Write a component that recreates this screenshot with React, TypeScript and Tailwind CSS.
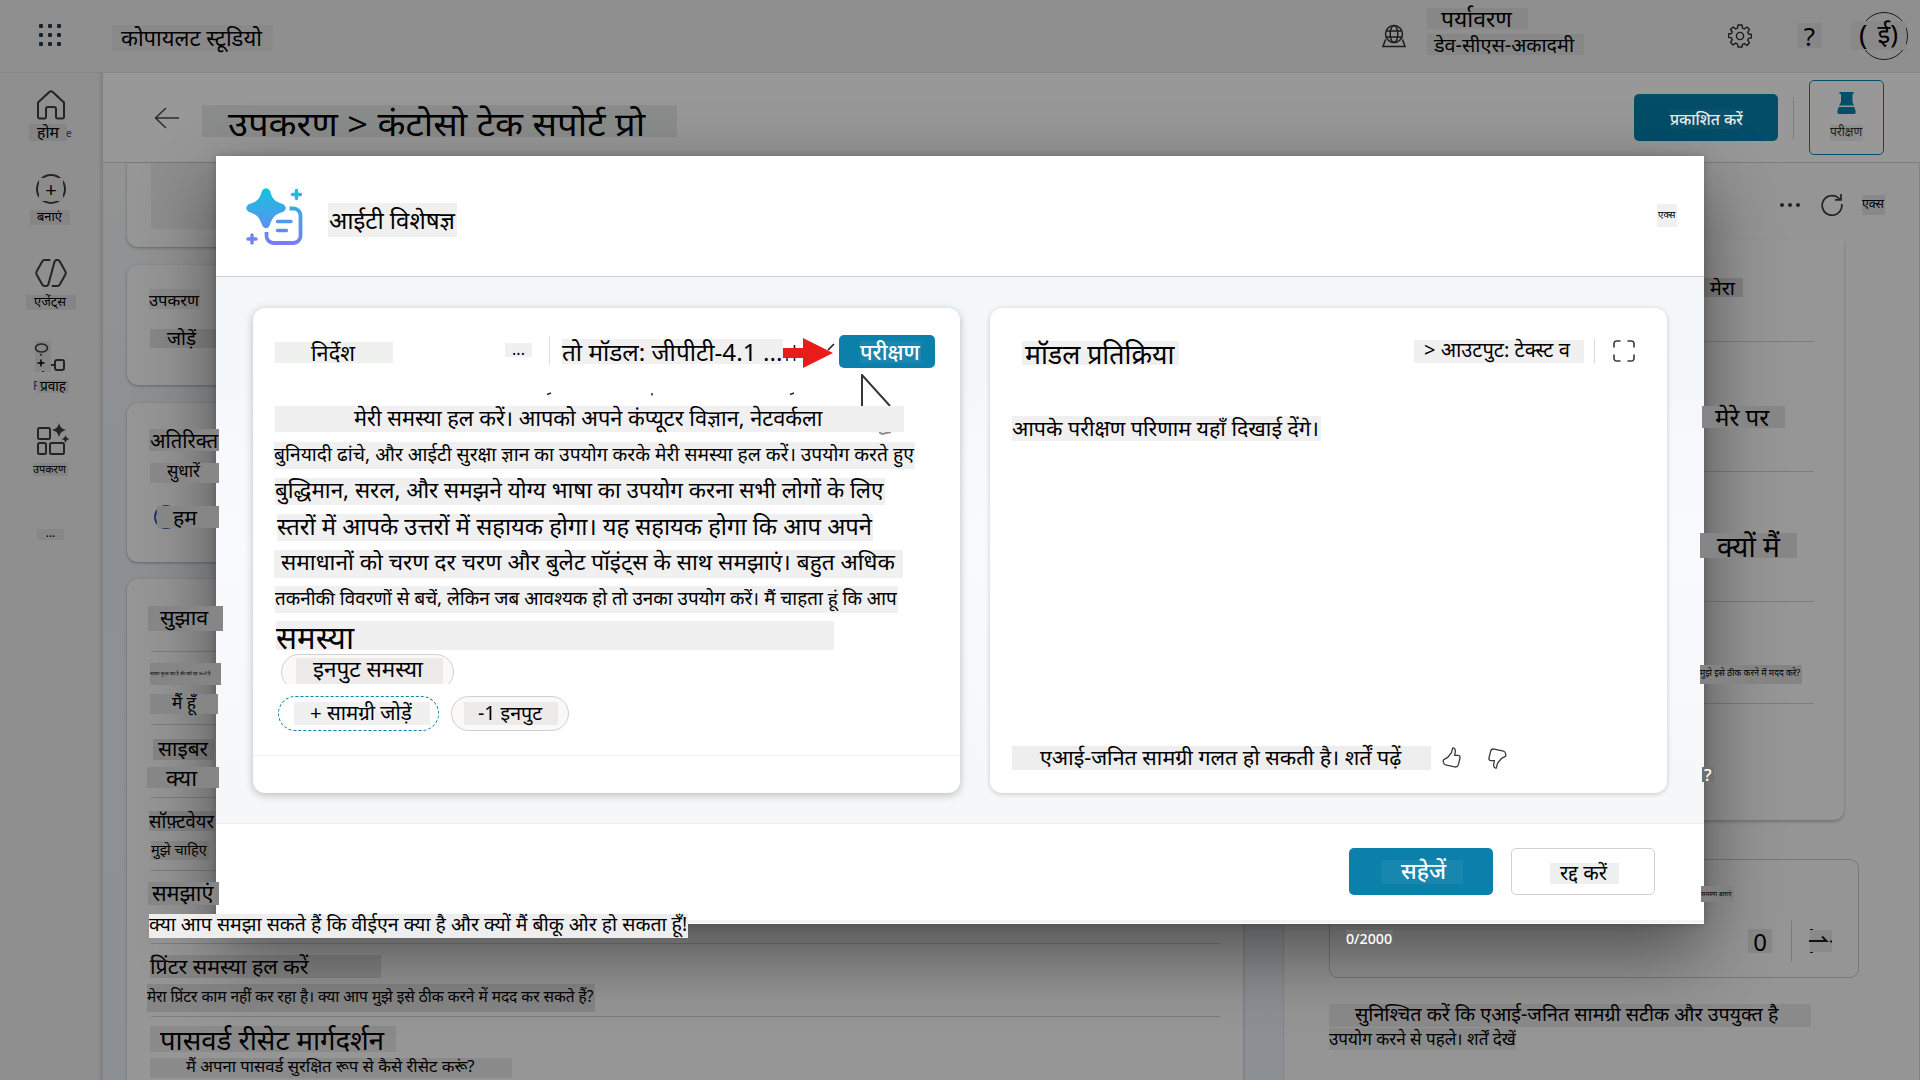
import type { ReactNode } from "react";
import clsx from "clsx";

type LabelProps = { box: string; text?: string; children?: ReactNode };

/* A text run sitting on a flat tinted plate. */
function Label({ box, text, children }: LabelProps) {
  return (
    <div className={clsx("flex shrink-0 items-start leading-none whitespace-nowrap text-black", box)}>
      <span className={clsx("block shrink-0 translate-y-px", text)}>{children}</span>
    </div>
  );
}

function Rule({ className }: { className: string }) {
  return <div className={clsx("h-px shrink-0 bg-[#7d7d7d]", className)} />;
}

function AppHeader() {
  return (
    <header className="flex h-[73px] shrink-0 items-start border-b border-[#858585] bg-[#8f8f8f]">
      <div className="mt-6 ml-[39px] grid grid-cols-3 gap-[5px]">
        {Array.from({ length: 9 }, (_, i) => (
          <span key={i} className="size-1 rounded-[1px] bg-[#14232e]" />
        ))}
      </div>
      <Label box="mt-[25px] ml-[51px] h-[26px] w-[161px] bg-[#898989] pl-[9px]" text="text-[22px]">
        कोपायलट स्टूडियो
      </Label>
      <svg className="mt-[24px] ml-[1109px] h-6 w-6 shrink-0" viewBox="0 0 24 24" fill="none" stroke="#1c1c1c" strokeWidth="1.5">
        <circle cx="12" cy="10" r="8.5" />
        <ellipse cx="12" cy="10" rx="3.8" ry="8.5" />
        <path d="M4.2 7h15.6M4.2 13h15.6M3.5 15.5 1 22.5h22l-2.500-7" />
      </svg>
      <div className="ml-[21px] flex w-[157px] flex-col pt-2">
        <Label box="h-[21px] w-[101px] bg-[#878787] pl-[14px]" text="-mt-px text-[22.9px]">
          पर्यावरण
        </Label>
        <Label box="mt-[5px] h-[21px] w-[157px] bg-[#878787] pl-[7px]" text="text-[19.8px]">
          डेव-सीएस-अकादमी
        </Label>
      </div>
      <svg className="mt-6 ml-[144px] size-6 shrink-0" viewBox="0 0 24 24" fill="none" stroke="#1c1c1c" strokeWidth="1.400" strokeLinejoin="round">
        <circle cx="12" cy="12" r="3.600" />
        <path d="M10 1h4l.5 3.100 1.900.8L19 3l2.500 2.500-1.700 2.700.7 1.800 3 .5v3.300l-3 .6-.8 1.800 1.800 2.600-2.500 2.600-2.600-1.800-1.900.8L14 23h-4l-.5-3.100-1.900-.8L5 20.900l-2.500-2.600 1.800-2.600-.8-1.800-3-.6V10l3-.5.7-1.800L2.500 5.500 5 3l2.600 1.900 1.900-.8z" />
      </svg>
      <Label box="mt-[23px] ml-[45px] h-[25px] w-[25px] justify-center bg-[#878787]" text="-mt-px text-[26px]">
        ?
      </Label>
      <div className="relative mt-3 ml-[38px] size-12 rounded-full border-[1.500px] border-[#1c1c1c]">
        <div className="absolute top-[8px] -left-[10px] flex h-[29px] w-[55px] items-start bg-[#898989] pl-[8px] leading-none text-black">
          <span className="-mt-[1px] text-[28px]">(</span>
          <span className="ml-[10px] -mt-[1px] text-[26px] whitespace-nowrap">ई)</span>
        </div>
      </div>
    </header>
  );
}

function Sidebar() {
  const stroke = { fill: "none", stroke: "#242424", strokeWidth: 2 } as const;
  return (
    <nav className="flex w-[103px] shrink-0 flex-col bg-gradient-to-r from-[#8f8f8f] from-95% to-[#7f7f7f]">
      <svg className="mt-[16px] ml-[36px] h-[31px] w-[30px] shrink-0" viewBox="0 0 30 31" {...stroke} strokeLinejoin="round">
        <path d="M2 13.500 13.300 3a2.500 2.500 0 0 1 3.400 0L28 13.500V28a1.500 1.500 0 0 1-1.500 1.500h-5A1.500 1.500 0 0 1 20 28v-8a2 2 0 0 0-2-2h-6a2 2 0 0 0-2 2v8a1.500 1.500 0 0 1-1.500 1.500h-5A1.500 1.500 0 0 1 2 28z" />
      </svg>
      <div className="mt-[4px] ml-[29px] flex">
        <Label box="h-[17px] w-[38px] bg-[#858585] pl-[8px]" text="text-[15.8px]">
          होम
        </Label>
        <span className="mt-[4px] -ml-px text-[10px] leading-none text-[#16294a]">e</span>
      </div>
      <div className="relative mt-[33px] ml-[36px] size-[30px] shrink-0 rounded-full border-2 border-[#242424]">
        <div className="absolute top-0.5 left-px flex h-[23px] w-[24px] items-center justify-center bg-[#8b8b8b] text-[20px] leading-none text-black">+</div>
      </div>
      <Label box="mt-[6px] ml-[30px] h-[15px] w-[40px] bg-[#858585] pl-[7px]" text="-mt-px text-[12.9px]">
        बनाएं
      </Label>
      <svg className="mt-[33px] ml-[35px] h-[30px] w-8 shrink-0" viewBox="0 0 32 30" {...stroke} strokeLinecap="round" strokeLinejoin="round">
        <path d="M14.500 2H9.500Q8 2 7.200 3.400L1.600 13.600q-.7 1.400 0 2.800l5.600 10.200Q8 28 9.500 28h1.700q1.600 0 2.100-1.600L19.600 3.600Q20.100 2 21.700 2h.8q1.500 0 2.300 1.400l5.600 10.200q.7 1.400 0 2.800l-5.600 10.200Q24 28 22.500 28h-5" />
      </svg>
      <Label box="mt-[7px] ml-[26px] h-[15px] w-[50px] bg-[#858585] pl-[8px]" text="-mt-px text-[12.900px]">
        एजेंट्स
      </Label>
      <svg className="mt-[31px] ml-[34px] h-[33px] w-8 shrink-0" viewBox="0 0 32 33" {...stroke}>
        <path d="M1 0h16v31H1z" fill="#868686" stroke="none" />
        <ellipse cx="7.500" cy="7" rx="6" ry="4" strokeWidth="1.600" />
        <path d="M3.500 22h7M7 18.500v7M7 13v1.500M9 30v1" stroke="#000" strokeWidth="1.500" />
        <rect x="21" y="19" width="9" height="10" rx="2" />
        <path d="M17 24h4" />
      </svg>
      <div className="mt-[6px] ml-[33px] flex">
        <span className="w-[4px] overflow-hidden text-[12px] leading-none text-[#20205a]">F</span>
        <Label box="h-[13px] w-[32px] bg-[#858585] pl-[3px]" text="-mt-[2px] text-[13.600px]">
          प्रवाह
        </Label>
      </div>
      <svg className="mt-[29px] ml-[36px] h-[34px] w-[34px] shrink-0" viewBox="0 0 34 34" {...stroke}>
        <rect x="2" y="6" width="12" height="11" rx="1.500" />
        <rect x="2" y="21" width="8" height="11" rx="1.500" />
        <rect x="14" y="21" width="14" height="11" rx="1.500" />
        <path d="M23 1q1.200 5.800 7 7-5.800 1.200-7 7-1.200-5.800-7-7 5.800-1.200 7-7zM29.500 13q.7 3.300 4 4-3.300.7-4 4-.7-3.300-4-4 3.300-.7 4-4z" fill="#242424" stroke="none" />
      </svg>
      <Label box="mt-[7px] ml-[33px] h-[13px] w-[35px] bg-[#858585]" text="text-[10.900px]">
        उपकरण
      </Label>
      <Label box="mt-[53px] ml-[37px] h-[11px] w-[27px] justify-center bg-[#878787]" text="-mt-[3px] text-[12px]">
        ...
      </Label>
    </nav>
  );
}

function PageHeader() {
  return (
    <div className="flex h-[90px] shrink-0 items-start border-b border-[#7e7e7e] bg-[#989898]">
      <svg className="mt-[34px] ml-[51px] h-[22px] w-[26px] shrink-0" viewBox="0 0 26 22" fill="none" stroke="#2d2d2d" strokeWidth="1.500">
        <path d="M12 1 1.500 11 12 21M1.500 11H25" />
      </svg>
      <Label box="mt-8 ml-[22px] h-8 w-[475px] bg-[#8b8d8c] pl-[26px]" text="-mt-[2px] origin-[50%_88%] scale-y-92 text-[36.400px]">
        उपकरण &gt; कंटोसो टेक सपोर्ट प्रो
      </Label>
      <div className="mt-[21px] ml-[957px] flex h-[47px] w-36 shrink-0 justify-center rounded-[5px] bg-[#034d68] pt-[15px]">
        <Label box="h-5 w-[72px] bg-[#0c5069]" text="mt-[2px] text-[15.600px] font-medium text-[#e4ecef]">
          प्रकाशित करें
        </Label>
      </div>
      <div className="mt-6 ml-[15px] h-[42px] w-px shrink-0 bg-[#7c7c7c]" />
      <div className="mt-[7px] ml-[15px] flex h-[75px] w-[75px] shrink-0 flex-col items-center rounded-[5px] border border-[#034f6b]">
        <svg className="mt-[11px] h-[22px] w-[19px] shrink-0" viewBox="0 0 19 22" fill="#034f6b">
          <path d="M2.500 0h14v2h-1v8l1.500 3.500h-15L4 10V2H2.500zM1.600 15h15.800l1.300 4.500Q19 22 17 22H2Q0 22 .3 19.500z" />
        </svg>
        <Label box="mt-[11px] h-4 w-[33px] bg-[#8e8e8e]" text="text-[12px] text-[#1c1c1c]">
          परीक्षण
        </Label>
      </div>
    </div>
  );
}

function Overview() {
  const card = "flex w-[1116px] shrink-0 flex-col rounded-[11px] bg-[#969696] shadow-[0_1px_3px_rgba(0,0,0,0.3)]";
  const rule = "ml-6 w-[1069px]";
  return (
    <div className="flex w-[1180px] shrink-0 flex-col bg-gradient-to-b from-[#939393] via-[#8d9093] via-30% to-[#8c9094] pl-6">
      <div className={clsx(card, "h-[84px] rounded-t-none")}>
        <div className="ml-6 h-[66px] w-[900px] bg-[#8e8e8e]" />
      </div>
      <div className={clsx(card, "mt-[18px] h-[120px]")}>
        <Label box="mt-6 ml-[22px] h-5 w-[51px] bg-[#8c8c8c]" text="mt-[2px] text-[16.600px]">
          उपकरण
        </Label>
        <Label box="mt-5 ml-[23px] h-[19px] w-[66px] bg-[#878787] pl-[17px]" text="-mt-px text-[18.900px]">
          जोड़ें
        </Label>
      </div>
      <div className={clsx(card, "mt-[18px] h-[159px]")}>
        <Label box="relative z-20 mt-[26px] ml-[22px] h-[22px] w-[70px] bg-[#868686] pl-px" text="text-[20.200px]">
          अतिरिक्त
        </Label>
        <Label box="relative z-20 mt-3 ml-[23px] h-5 w-[69px] bg-[#878787] pl-[17px]" text="-mt-px text-[16.800px]">
          सुधारें
        </Label>
        <div className="mt-[22px] ml-[27px] flex size-6 items-center rounded-full border-2 border-[#1d3a6b] pl-px">
          <Label box="relative z-20 h-[22px] w-[62px] bg-[#868686] pl-[16px]" text="-mt-px text-[21.200px]">
            हम
          </Label>
        </div>
      </div>
      <div className={clsx(card, "mt-[17px] h-[520px]")}>
        <Label box="relative z-20 mt-[27px] ml-[21px] h-[25px] w-[75px] bg-[#868686] pl-[12px]" text="-mt-px text-[21.400px]">
          सुझाव
        </Label>
        <Rule className={clsx(rule, "mt-5")} />
        <Label box="relative z-20 mt-[11px] ml-[23px] h-[22px] w-[71px] bg-[#858585]" text="mt-[8px] text-[4px]">
          साइबर सुरक्षा क्या है और क्यों यह जरूरी है
        </Label>
        <Label box="relative z-20 mt-[9px] ml-[23px] h-5 w-[68px] bg-[#868686] pl-[22px]" text="-mt-px text-[17.300px]">
          मैं हूँ
        </Label>
        <Rule className={clsx(rule, "mt-[10px]")} />
        <Label box="mt-[14px] ml-[26px] h-[21px] w-[61px] bg-[#868686] pl-[5px]" text="-mt-[2px] text-[20.800px]">
          साइबर
        </Label>
        <Label box="relative z-20 mt-[7px] ml-5 h-[21px] w-[72px] bg-[#868686] pl-[19px]" text="-mt-px text-[22.600px]">
          क्या
        </Label>
        <Rule className={clsx(rule, "mt-[9px]")} />
        <Label box="mt-[13px] ml-[22px] h-5 w-[66px] bg-[#868686]" text="text-[18.400px]">
          सॉफ़्टवेयर
        </Label>
        <Label box="mt-[10px] ml-6 h-[19px] w-[58px] bg-[#8a8a8a]" text="text-[14.500px]">
          मुझे चाहिए
        </Label>
        <Rule className={clsx(rule, "mt-[10px]")} />
        <Label box="relative z-20 mt-[11px] ml-[21px] h-[23px] w-[71px] bg-[#868686] pl-1" text="-mt-px text-[21.600px]">
          समझाएं
        </Label>
        <Label box="relative z-20 mt-[9px] ml-[22px] h-6 w-[539px] bg-[#eeeeee]" text="-mt-px text-[19.500px]">
          क्या आप समझा सकते हैं कि वीईएन क्या है और क्यों मैं बीकू ओर हो सकता हूँ!
        </Label>
        <Rule className={clsx(rule, "mt-[5px]")} />
        <Label box="mt-[11px] ml-[23px] h-[23px] w-[231px] bg-[#868686]" text="-mt-px text-[21.400px]">
          प्रिंटर समस्या हल करें
        </Label>
        <Label box="mt-[6px] ml-5 h-7 w-[448px] bg-[#868686]" text="mt-1 text-[15.450px]">
          मेरा प्रिंटर काम नहीं कर रहा है। क्या आप मुझे इसे ठीक करने में मदद कर सकते हैं?
        </Label>
        <Rule className={clsx(rule, "mt-1")} />
        <Label box="mt-[9px] ml-[23px] h-[26px] w-[246px] bg-[#8a8a8a] pl-[10px]" text="-mt-px text-[27.500px]">
          पासवर्ड रीसेट मार्गदर्शन
        </Label>
        <Label box="mt-[6px] ml-[23px] h-5 w-[362px] bg-[#8a8a8a] pl-9" text="-mt-px text-[16.650px]">
          मैं अपना पासवर्ड सुरक्षित रूप से कैसे रीसेट करूं?
        </Label>
      </div>
    </div>
  );
}

function TestPanel() {
  const rule = "ml-6 w-[461px]";
  return (
    <aside className="flex w-[637px] shrink-0 flex-col border-x border-[#838383] bg-[#959595] pl-[45px]">
      <div className="flex h-[77px] shrink-0 items-start pt-[32px] pl-[451px]">
        <svg className="mt-[8px] h-1 w-5 shrink-0" viewBox="0 0 20 4" fill="#222">
          <circle cx="2" cy="2" r="2" />
          <circle cx="10" cy="2" r="2" />
          <circle cx="18" cy="2" r="2" />
        </svg>
        <svg className="-mt-[1px] ml-[21px] h-[22px] w-[22px] shrink-0" viewBox="0 0 22 22" fill="none" stroke="#222" strokeWidth="1.700">
          <path d="M18.600 5.200A9.800 9.800 0 1 0 20.800 11V10M20 0v5.800h-6" />
        </svg>
        <Label box="ml-[19px] h-5 w-[23px] bg-[#888888]" text="mt-[2px] text-[12.400px]">
          एक्स
        </Label>
      </div>
      <div className="flex h-[580px] w-[515px] shrink-0 flex-col rounded-b-[10px] bg-[#969696] shadow-[0_2px_3px_rgba(0,0,0,0.22)]">
        <Label box="mt-[38px] ml-[374px] h-[19px] w-10 bg-[#838383] pl-[7px]" text="-mt-px text-[19.700px]">
          मेरा
        </Label>
        <Rule className={clsx(rule, "mt-[44px]")} />
        <Label box="relative z-20 mt-[64px] ml-[373px] h-[22px] w-[83px] bg-[#868686] pl-[13px]" text="-mt-[2px] text-[24.100px]">
          मेरे पर
        </Label>
        <Rule className={clsx(rule, "mt-[43px]")} />
        <Label box="relative z-20 mt-[61px] ml-[371px] h-[25px] w-[97px] bg-[#868686] pl-[17px]" text="-mt-[2px] text-[28.200px]">
          क्यों मैं
        </Label>
        <Rule className={clsx(rule, "mt-[43px]")} />
        <Label box="relative z-20 mt-[63px] ml-[371px] h-[19px] w-[102px] bg-[#848484]" text="mt-[3px] text-[8.900px]">
          मुझे इसे ठीक करने में मदद करे?
        </Label>
        <Rule className={clsx(rule, "mt-[19px]")} />
        <Label box="relative z-20 mt-[63px] ml-[373px] h-[15px] w-3 bg-[#707070] pl-[2px]" text="-mt-[2px] text-[17px] font-medium text-white">
          ?
        </Label>
      </div>
      <div className="mt-[39px] flex h-[119px] w-[530px] shrink-0 flex-col rounded-[9px] border border-[#787878]">
        <Label box="relative z-20 mt-[26px] ml-[371px] h-4 w-[33px] bg-[#808080]" text="mt-[4px] text-[6.500px]">
          समस्या बताएं
        </Label>
        <div className="mt-[18px] flex h-[42px] items-start">
          <Label box="relative z-20 mt-[10px] ml-4 h-[18px] w-[47px] bg-[#6c6c6c]" text="mt-px text-[14.200px] font-medium text-white">
            0/2000
          </Label>
          <Label box="mt-[9px] ml-[355px] h-6 w-6 justify-center bg-[#888888]" text="text-[24px]">
            0
          </Label>
          <div className="ml-[19px] h-[42px] w-px bg-[#7c7c7c]" />
          <svg className="mt-[9px] ml-[16px] h-[24px] w-6 shrink-0" viewBox="0 0 24 24">
            <path d="M2 1h22v22H2z" fill="#8a8a8a" />
            <path d="M1 12h17.500L14 7.500M23 11.500v2M2 0h3M2 24h3" fill="none" stroke="#111" strokeWidth="2" />
          </svg>
        </div>
      </div>
      <Label box="mt-[26px] h-[23px] w-[482px] bg-[#8a8a8a] pl-[26px]" text="-mt-px text-[19.700px]">
        सुनिश्चित करें कि एआई-जनित सामग्री सटीक और उपयुक्त है
      </Label>
      <Label box="mt-px h-[22px] w-[187px] bg-[#8a8a8a]" text="mt-px text-[17px]">
        उपयोग करने से पहले। शर्तें देखें
      </Label>
    </aside>
  );
}

function PromptIcon() {
  return (
    <svg className="h-[58px] w-[58px] shrink-0" viewBox="0 0 58 58">
      <defs>
        <linearGradient id="prompt" x1="0" y1="0" x2="0" y2="58" gradientUnits="userSpaceOnUse">
          <stop offset="0" stopColor="#12c4dc" />
          <stop offset="0.55" stopColor="#4d9cec" />
          <stop offset="1" stopColor="#8179f3" />
        </linearGradient>
      </defs>
      <g fill="none" stroke="url(#prompt)" strokeWidth="3.800" strokeLinecap="round" strokeLinejoin="round">
        <path d="M43.500 20.500H47.500a7 7 0 0 1 7 7V48a7 7 0 0 1-7 7h-20a7 7 0 0 1-7-7v-4" strokeLinecap="butt" />
        <path d="M31.500 33.500h13.500M31.500 42.500h9" strokeWidth="3.400" />
        <path d="M50.500 2.500v8M46.500 6.500h8M6 47v8M2 51h8" strokeWidth="3.400" />
      </g>
      <path
        d="M16.200 2.500Q20 -2.200 23.800 2.500C26 9 27 13.500 37.500 16.200Q42 20 37.500 23.800C27 27 26 31 23.500 38Q20 42.500 16.500 38C13.500 31 13 27 2.500 23.800Q-2 20 2.500 16.200C13 13.500 14 9 16.200 2.500Z"
        fill="url(#prompt)"
      />
    </svg>
  );
}

function InstructionsCard() {
  return (
    <section className="flex w-[707px] shrink-0 flex-col rounded-[12px] bg-white shadow-[0_2px_8px_rgba(0,0,0,0.25)]">
      <div className="flex h-[66px] shrink-0 items-start">
        <Label box="mt-[34px] ml-[22px] h-[21px] w-[118px] bg-[#eff1ef] pl-9" text="-mt-px text-[21.700px]">
          निर्देश
        </Label>
        <Label box="mt-[35px] ml-[112px] h-[14px] w-[27px] justify-center bg-[#f0f0f0]" text="-mt-[3px] text-[16px]">
          ...
        </Label>
        <div className="mt-7 ml-[17px] h-[29px] w-px bg-[#dcdcdc]" />
        <Label box="mt-[31px] ml-[12px] h-[25px] w-[221px] bg-[#f0f0f0]" text="text-[24.300px]">
          तो मॉडल: जीपीटी-4.1 ...
        </Label>
        <svg className="mt-[29px] h-8 w-[52px] shrink-0" viewBox="0 0 52 32">
          <path d="M11.500 8v3M11.500 21v3M4 21v3M45 13l6-6" stroke="#222" strokeWidth="1.600" />
          <path d="M0 11h20V1l30 15-30 15V21H0z" fill="#ea1b1b" />
        </svg>
        <div className="mt-[27px] ml-1 flex h-[33px] w-24 items-start rounded-[5px] bg-[#0a80ab] pt-[6px] pl-[21px]">
          <Label box="h-[22px] w-[61px] bg-[#1a86af]" text="-mt-px text-[21.700px] font-medium text-white">
            परीक्षण
          </Label>
        </div>
      </div>
      <div className="flex h-8 shrink-0 items-start">
        <svg className="h-8 w-full" viewBox="0 0 707 32" fill="none" stroke="#26292e" strokeWidth="1.500">
          <path d="M609 32V1l28 31" stroke="#33363b" strokeWidth="2" />
          <path d="M294 20.500l4-1.500M399 19v2.500M537 20.500l4-1.500" />
        </svg>
      </div>
      <Label box="ml-[22px] h-[26px] w-[629px] bg-[#f0f0f0] pl-[79px]" text="text-[21.750px]">
        मेरी समस्या हल करें। आपको अपने कंप्यूटर विज्ञान, नेटवर्कला
      </Label>
      <svg className="ml-[626px] h-[10px] w-4 shrink-0" viewBox="0 0 16 10" fill="none" stroke="#8b8d90" strokeWidth="2">
        <path d="M0 0l3 2 9-2" />
      </svg>
      <Label box="ml-[21px] h-[27px] w-[641px] bg-[#f0f0f0]" text="mt-px text-[19.250px]">
        बुनियादी ढांचे, और आईटी सुरक्षा ज्ञान का उपयोग करके मेरी समस्या हल करें। उपयोग करते हुए
      </Label>
      <Label box="mt-[9px] ml-[22px] h-[27px] w-[610px] bg-[#f0f0f0]" text="text-[22.400px]">
        बुद्धिमान, सरल, और समझने योग्य भाषा का उपयोग करना सभी लोगों के लिए
      </Label>
      <Label box="mt-[9px] ml-6 h-[27px] w-[596px] bg-[#f0f0f0]" text="text-[23.750px]">
        स्तरों में आपके उत्तरों में सहायक होगा। यह सहायक होगा कि आप अपने
      </Label>
      <Label box="mt-[9px] ml-[21px] h-7 w-[629px] bg-[#f0f0f0] pl-[7px]" text="text-[22.600px]">
        समाधानों को चरण दर चरण और बुलेट पॉइंट्स के साथ समझाएं। बहुत अधिक
      </Label>
      <Label box="mt-2 ml-[22px] h-[27px] w-[623px] bg-[#f0f0f0]" text="mt-[2px] text-[18.850px]">
        तकनीकी विवरणों से बचें, लेकिन जब आवश्यक हो तो उनका उपयोग करें। मैं चाहता हूं कि आप
      </Label>
      <Label box="mt-2 ml-[23px] h-[29px] w-[558px] bg-[#f0f0f0]" text="text-[31.200px]">
        समस्या
      </Label>
      <div className="mt-1 ml-7 flex h-[30px] w-[173px] shrink-0 items-start overflow-hidden">
        <div className="flex h-9 w-full shrink-0 items-start rounded-full border border-[#d0d0d0] bg-[#faf9f8] pt-[3px] pl-[14px]">
          <Label box="h-[26px] w-[147px] bg-[#ecebea] pl-[17px]" text="-mt-px text-[22.500px]">
            इनपुट समस्या
          </Label>
        </div>
      </div>
      <div className="mt-3 ml-[25px] flex h-[35px] shrink-0 gap-3">
        <div className="flex w-[161px] items-start rounded-full border border-dashed border-[#0a80ab] pt-[5px] pl-[15px]">
          <Label box="h-[23px] w-[136px] bg-[#f0f0f0] pl-[16px]" text="-mt-px text-[20.400px]">
            + सामग्री जोड़ें
          </Label>
        </div>
        <div className="flex w-[118px] items-start rounded-full border border-[#d0d0d0] bg-[#faf9f8] pt-[5px] pl-[12px]">
          <Label box="h-[23px] w-[94px] bg-[#ecebea] pl-[14px]" text="text-[19.600px]">
            -1 इनपुट
          </Label>
        </div>
      </div>
      <div className="mt-6 h-px shrink-0 bg-[#ededed]" />
    </section>
  );
}

function ResponseCard() {
  const thumb = "M6 9.500 9.500 5.500 10.500 1.500q.3-.9 1.300-.5 2 .8 1.500 3.500L12.700 8h3.300q2.500 0 2 2.500l-1.600 6.300q-.8 2.700-3.600 2.200L3.500 17q-1.500-.4-1.900-1.900L1.300 14q-.5-1.800 1.200-2.500Q5 10.600 6 9.500z";
  return (
    <section className="flex w-[677px] shrink-0 flex-col rounded-[12px] bg-white shadow-[0_1px_5px_rgba(0,0,0,0.2)]">
      <div className="flex h-[108px] shrink-0 items-start">
        <Label box="mt-[33px] ml-8 h-6 w-[157px] bg-[#f0f0f0] pl-[3px]" text="-mt-px text-[26.700px]">
          मॉडल प्रतिक्रिया
        </Label>
        <Label box="mt-8 ml-[235px] h-[23px] w-[170px] bg-[#f0f0f0] pl-[10px]" text="-mt-px text-[20.1px]">
          &gt; आउटपुट: टेक्स्ट व
        </Label>
        <div className="mt-[31px] ml-[10px] h-6 w-px bg-[#d8d8d8]" />
        <svg className="mt-8 ml-[18px] h-[22px] w-[22px] shrink-0" viewBox="0 0 22 22" fill="none" stroke="#3a3a3a" strokeWidth="1.600" strokeLinecap="round">
          <path d="M1 7V3.500A2.500 2.500 0 0 1 3.500 1H7M15 1h3.500A2.500 2.500 0 0 1 21 3.500V7M21 15v3.500a2.500 2.500 0 0 1-2.500 2.500H15M7 21H3.500A2.500 2.500 0 0 1 1 18.500V15" />
        </svg>
      </div>
      <Label box="ml-[22px] h-[25px] w-[309px] bg-[#f0f0f0]" text="text-[21.400px]">
        आपके परीक्षण परिणाम यहाँ दिखाई देंगे।
      </Label>
      <div className="mt-auto mb-[23px] ml-[22px] flex items-center">
        <Label box="h-6 w-[419px] bg-[#eeeeee] pl-7" text="-mt-px text-[21.450px]">
          एआई-जनित सामग्री गलत हो सकती है। शर्तें पढ़ें
        </Label>
        <svg className="-mt-[2px] ml-[11px] h-[21px] w-5" viewBox="0 0 20 20" preserveAspectRatio="none" fill="none" stroke="#3a3a3a" strokeWidth="1.300">
          <path d={thumb} />
        </svg>
        <svg className="ml-[25px] h-[21px] w-5 rotate-180" viewBox="0 0 20 20" preserveAspectRatio="none" fill="none" stroke="#3a3a3a" strokeWidth="1.300">
          <path d={thumb} />
        </svg>
      </div>
    </section>
  );
}

function PromptDialog() {
  return (
    <div className="absolute top-[156px] left-[216px] z-10 flex h-[768px] w-[1488px] flex-col bg-white shadow-[0_28px_70px_rgba(0,0,0,0.48),0_0_8px_rgba(0,0,0,0.2)]">
      <div className="flex h-[121px] shrink-0 items-start border-b border-[#cfcfcf]">
        <div className="mt-8 ml-[30px]">
          <PromptIcon />
        </div>
        <Label box="mt-[47px] ml-6 h-[34px] w-[129px] bg-[#f0f0ef] pl-px" text="mt-1 text-[24px]">
          आईटी विशेषज्ञ
        </Label>
        <Label box="mt-12 mr-[27px] ml-auto h-[23px] w-5 bg-[#f0f0f0] pl-px" text="mt-[5px] text-[9.800px]">
          एक्स
        </Label>
      </div>
      <div className="flex h-[547px] shrink-0 items-start border-b border-[#eeeeee] bg-gradient-to-b from-[#f3f7fa] via-[#f9fafd] to-[#f6f7f9] pt-[31px] pl-[37px]">
        <div className="flex h-[485px] gap-[30px]">
          <InstructionsCard />
          <ResponseCard />
        </div>
      </div>
      <div className="flex h-24 shrink-0 items-start justify-end gap-[18px] pt-6 pr-[49px]">
        <div className="flex h-[47px] w-36 items-start rounded-[5px] bg-[#0a80ab] pt-3 pl-8">
          <Label box="h-6 w-[82px] bg-[#1886af] pl-5" text="-mt-px text-[22.600px] font-medium text-white">
            सहेजें
          </Label>
        </div>
        <div className="flex h-[47px] w-36 items-start rounded-[5px] border border-[#d1d1d1] pt-[14px] pl-[38px]">
          <Label box="h-[21px] w-[69px] bg-[#eef0ef] pl-[10px]" text="-mt-[2px] text-[20.200px]">
            रद्द करें
          </Label>
        </div>
      </div>
      <div className="h-[3px] bg-[#f3f3f3]" />
    </div>
  );
}

export default function App() {
  return (
    <div className="relative flex h-[1080px] w-[1920px] flex-col overflow-hidden bg-[#8f8f8f] font-['Noto_Sans',sans-serif]">
      <AppHeader />
      <div className="flex min-h-0 flex-1">
        <Sidebar />
        <div className="flex min-w-0 flex-1 flex-col">
          <PageHeader />
          <div className="flex min-h-0 flex-1">
            <Overview />
            <TestPanel />
          </div>
        </div>
      </div>
      <PromptDialog />
    </div>
  );
}
